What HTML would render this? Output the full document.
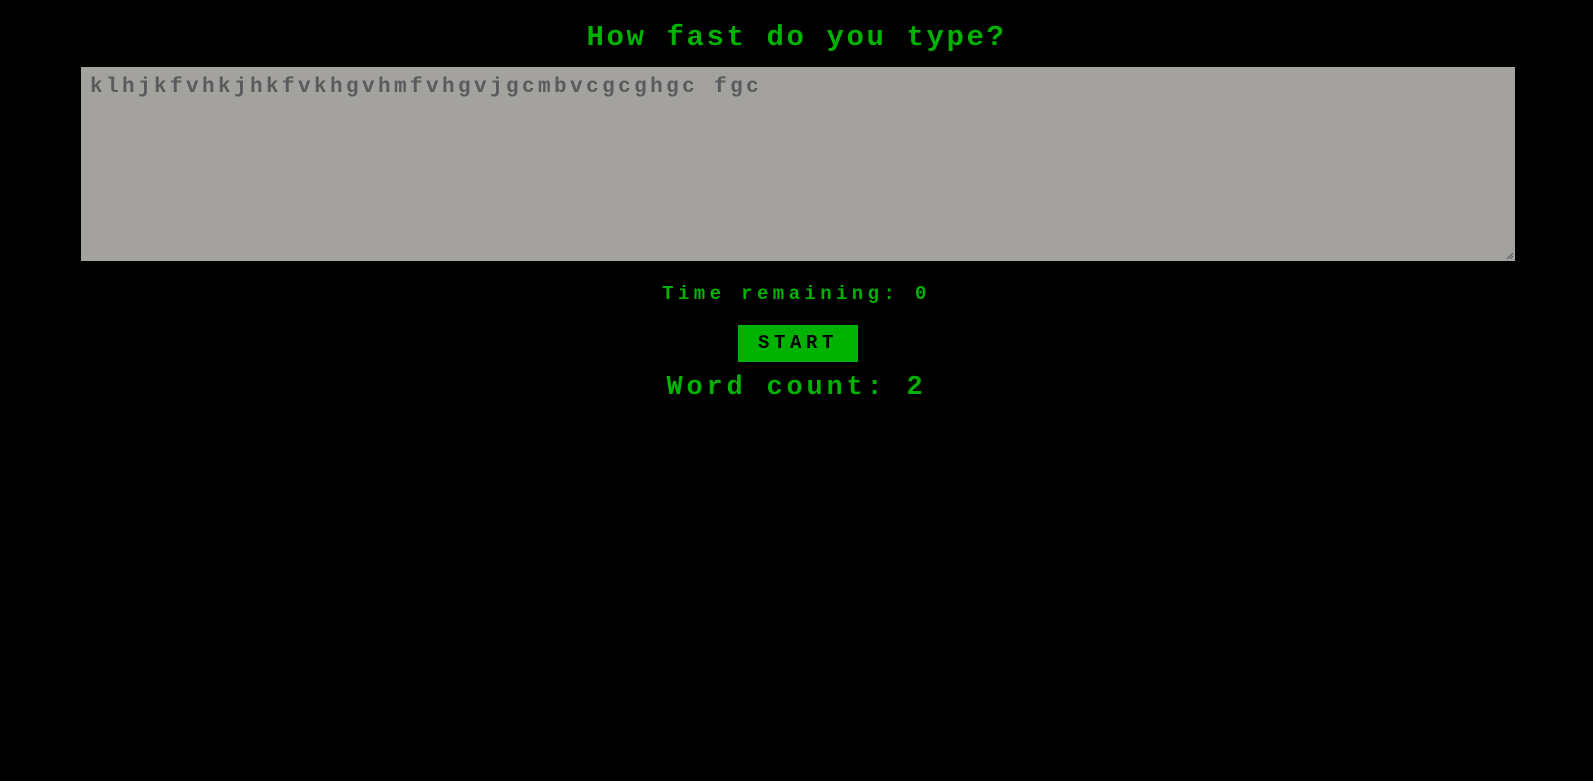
<!DOCTYPE html>
<html><head><meta charset="utf-8"><style>
html,body{margin:0;padding:0;background:#000;width:1593px;height:781px;overflow:hidden;font-family:"Liberation Mono",monospace;font-weight:bold;}
.t{position:absolute;left:0;width:1593px;text-align:center;color:#00b200;white-space:nowrap;}
#title{top:21px;font-size:29px;letter-spacing:2.6px;}
#ta{position:absolute;left:81px;top:67px;width:1434px;height:194px;background:#a3a29f;box-sizing:border-box;}
#ta span{position:absolute;left:9px;top:9px;font-size:21px;letter-spacing:3.4px;color:#5b5a5c;}
#tr{top:283px;font-size:19px;letter-spacing:4.4px;}
#btn{position:absolute;left:738px;top:325px;width:120px;height:37px;background:#00b200;color:#000;font-size:19px;letter-spacing:4.6px;text-align:center;line-height:37px;}
#wc{top:373px;font-size:27px;letter-spacing:3.8px;}
</style></head><body>
<div class="t" id="title">How fast do you type?</div>
<div id="ta"><span>klhjkfvhkjhkfvkhgvhmfvhgvjgcmbvcgcghgc fgc</span>
<svg style="position:absolute;right:1px;bottom:1px" width="8" height="8"><path d="M7 1L1 7M7 4L4 7" stroke="#555" stroke-width="1"/></svg></div>
<div class="t" id="tr">Time remaining: 0</div>
<div id="btn">START</div>
<div class="t" id="wc">Word count: 2</div>
</body></html>
